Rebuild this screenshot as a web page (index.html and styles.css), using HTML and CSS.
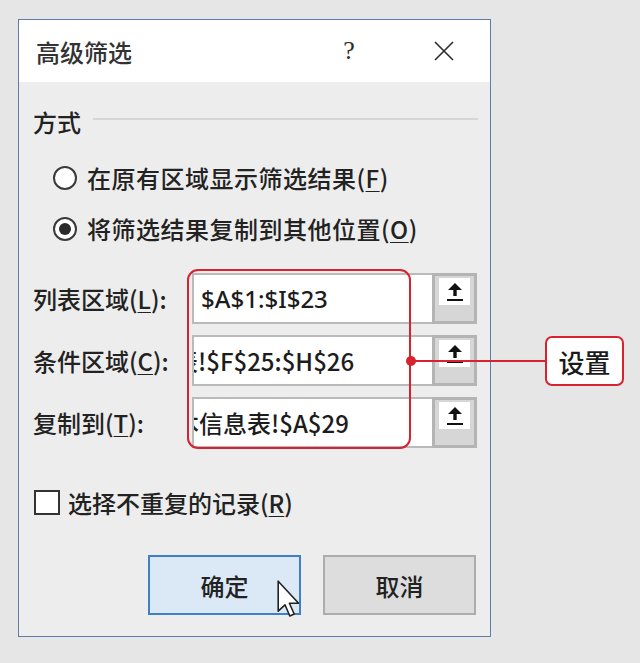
FILE: index.html
```html
<!DOCTYPE html>
<html lang="zh-CN">

<head>
    <meta charset="UTF-8">
    <meta name="viewport" content="width=device-width, initial-scale=1.0">
    <title>高级筛选</title>
    <link rel="stylesheet" href="styles.css">
</head>

<body>
    <div class="dialog">
        <div class="titlebar">
            <span class="title">高级筛选</span>
            <span class="help">?</span>
            <span class="close">
                <svg width="22" height="22" viewBox="0 0 22 22">
                    <path d="M2 2 L20 20 M20 2 L2 20" stroke="#2b2b2b" stroke-width="1.6" fill="none" />
                </svg>
            </span>
        </div>

        <div class="content">
            <div class="group-head">
                <span>方式</span>
                <span class="rule"></span>
            </div>

            <div class="radio-row">
                <span class="radio"></span>
                <span>在原有区域显示筛选结果(<u>F</u>)</span>
            </div>
            <div class="radio-row">
                <span class="radio checked"></span>
                <span>将筛选结果复制到其他位置(<u>O</u>)</span>
            </div>

            <div class="fields">
                <div class="field">
                    <span class="label">列表区域(<u>L</u>):</span>
                    <div class="input"><span class="value">$A$1:$I$23</span></div>
                    <div class="pick">
                        <div class="pick-face">
                            <svg width="18" height="20" viewBox="0 0 18 20">
                                <path d="M9 1 L2 8 L7.3 8 L7.3 14 L10.7 14 L10.7 8 L16 8 Z" fill="#111" />
                                <rect x="1" y="17" width="16" height="2" fill="#111" />
                            </svg>
                        </div>
                    </div>
                </div>
                <div class="field">
                    <span class="label">条件区域(<u>C</u>):</span>
                    <div class="input"><span class="value scrolled-a">表!$F$25:$H$26</span></div>
                    <div class="pick">
                        <div class="pick-face">
                            <svg width="18" height="20" viewBox="0 0 18 20">
                                <path d="M9 1 L2 8 L7.3 8 L7.3 14 L10.7 14 L10.7 8 L16 8 Z" fill="#111" />
                                <rect x="1" y="17" width="16" height="2" fill="#111" />
                            </svg>
                        </div>
                    </div>
                </div>
                <div class="field">
                    <span class="label">复制到(<u>T</u>):</span>
                    <div class="input"><span class="value scrolled-b">本信息表!$A$29</span></div>
                    <div class="pick">
                        <div class="pick-face">
                            <svg width="18" height="20" viewBox="0 0 18 20">
                                <path d="M9 1 L2 8 L7.3 8 L7.3 14 L10.7 14 L10.7 8 L16 8 Z" fill="#111" />
                                <rect x="1" y="17" width="16" height="2" fill="#111" />
                            </svg>
                        </div>
                    </div>
                </div>
            </div>

            <div class="check-row">
                <span class="checkbox"></span>
                <span>选择不重复的记录(<u>R</u>)</span>
            </div>

            <div class="buttons">
                <button class="btn primary">确定</button>
                <button class="btn">取消</button>
            </div>
        </div>
    </div>

    <!-- annotation over the dialog -->
    <div class="mark-frame"></div>
    <div class="mark-line"></div>
    <div class="mark-dot"></div>
    <div class="callout">设置</div>

    <svg class="cursor" width="25" height="38" viewBox="0 0 12.5 19">
        <path d="M0.6 0.6 L0.6 15.6 L4 12.4 L6.4 18 L8.6 17 L6.2 11.6 L10.8 11.6 Z" fill="#fff" stroke="#222"
            stroke-width="0.8" stroke-linejoin="round" />
    </svg>
</body>

</html>
```

FILE: styles.css
```css
* {
    box-sizing: border-box;
}

body {
    margin: 0;
    position: relative;
    width: 640px;
    height: 663px;
    background-color: #e6e6e7;
    font-family: "Noto Sans CJK SC", "Noto Sans", sans-serif;
    font-weight: 500;
    color: #222;
    overflow: hidden;
}

u {
    text-decoration-thickness: 1px;
    text-underline-offset: 3px;
}

.dialog {
    margin: 19px 0 0 18px;
    width: 473px;
    height: 618px;
    border: 1.5px solid #5d7fa5;
    background-color: #ededed;
}

.titlebar {
    display: flex;
    align-items: center;
    height: 62px;
    padding: 0 21px 0 17px;
    background-color: #fff;
}

.title {
    flex: 1;
    font-size: 24px;
    color: #333;
}

.help {
    width: 40px;
    text-align: center;
    font-family: "Liberation Serif", serif;
    font-size: 26px;
    color: #2b2b2b;
}

.close {
    width: 50px;
    margin-left: 50px;
    display: flex;
    justify-content: center;
}

.content {
    padding: 24px 12px 0 14px;
    font-size: 24px;
}

.group-head {
    display: flex;
    align-items: center;
    height: 30px;
}

.rule {
    flex: 1;
    height: 1.5px;
    margin-left: 12px;
    margin-top: -4px;
    background-color: #d6d6d6;
}

.radio-row {
    display: flex;
    align-items: center;
    height: 51px;
    padding-left: 20px;
    letter-spacing: 0.5px;
}

.group-head + .radio-row {
    margin-top: 16px;
}

.radio {
    width: 24px;
    height: 24px;
    margin-right: 10px;
    border: 2px solid #3a3a3a;
    border-radius: 50%;
    background-color: #fff;
    display: flex;
    align-items: center;
    justify-content: center;
}

.radio.checked::after {
    content: "";
    width: 12px;
    height: 12px;
    border-radius: 50%;
    background-color: #2a2a2a;
}

.fields {
    margin-top: 19px;
    display: flex;
    flex-direction: column;
    gap: 11px;
}

.field {
    display: flex;
    align-items: center;
    height: 51px;
}

.label {
    width: 159px;
}

.input {
    width: 240px;
    height: 51px;
    border: 2px solid #bababa;
    border-right: none;
    background-color: #fff;
    overflow: hidden;
    white-space: nowrap;
    display: flex;
    align-items: center;
    font-family: "Noto Sans", "Noto Sans CJK SC", sans-serif;
    color: #1c1c1c;
}

.value {
    padding-left: 7px;
}

.value.scrolled-a {
    padding-left: 0;
    margin-left: -20px;
    font-family: "Noto Sans CJK SC", sans-serif;
}

.value.scrolled-b {
    padding-left: 0;
    margin-left: -19px;
    font-family: "Noto Sans CJK SC", sans-serif;
}

.pick {
    width: 45px;
    height: 51px;
    border: 3px solid #b4b4b4;
    background-color: #d6d6d6;
    padding: 2px 4px 0;
}

.pick-face {
    height: 27px;
    background-color: #fff;
    display: flex;
    align-items: center;
    justify-content: center;
}

.check-row {
    display: flex;
    align-items: center;
    height: 30px;
    margin-top: 39px;
}

.checkbox {
    width: 26px;
    height: 25px;
    margin-left: 1px;
    margin-right: 8px;
    border: 2px solid #333;
    background-color: #fff;
}

.buttons {
    display: flex;
    justify-content: flex-end;
    gap: 22px;
    margin-top: 38px;
    padding-right: 2px;
}

.btn {
    width: 153px;
    height: 60px;
    font-family: "Noto Sans CJK SC", sans-serif;
    font-weight: 500;
    font-size: 24px;
    color: #222;
    border: 2px solid #adadad;
    background-color: #dddddd;
}

.btn.primary {
    border-color: #3f7fc9;
    background-color: #dbe8f6;
}

.mark-frame {
    position: absolute;
    left: 187px;
    top: 269px;
    width: 224px;
    height: 180px;
    border: 2px solid #d7232f;
    border-radius: 11px;
}

.mark-line {
    position: absolute;
    left: 411px;
    top: 360px;
    width: 134px;
    height: 2px;
    background-color: #d7232f;
}

.mark-dot {
    position: absolute;
    left: 406px;
    top: 356px;
    width: 10px;
    height: 10px;
    border-radius: 50%;
    background-color: #d7232f;
}

.callout {
    position: absolute;
    left: 545px;
    top: 336px;
    width: 79px;
    height: 50px;
    border: 2px solid #d7232f;
    border-radius: 7px;
    background-color: #fff;
    display: flex;
    align-items: center;
    justify-content: center;
    font-size: 26px;
    color: #1a1a1a;
}

.cursor {
    position: absolute;
    left: 277px;
    top: 580px;
}
```
